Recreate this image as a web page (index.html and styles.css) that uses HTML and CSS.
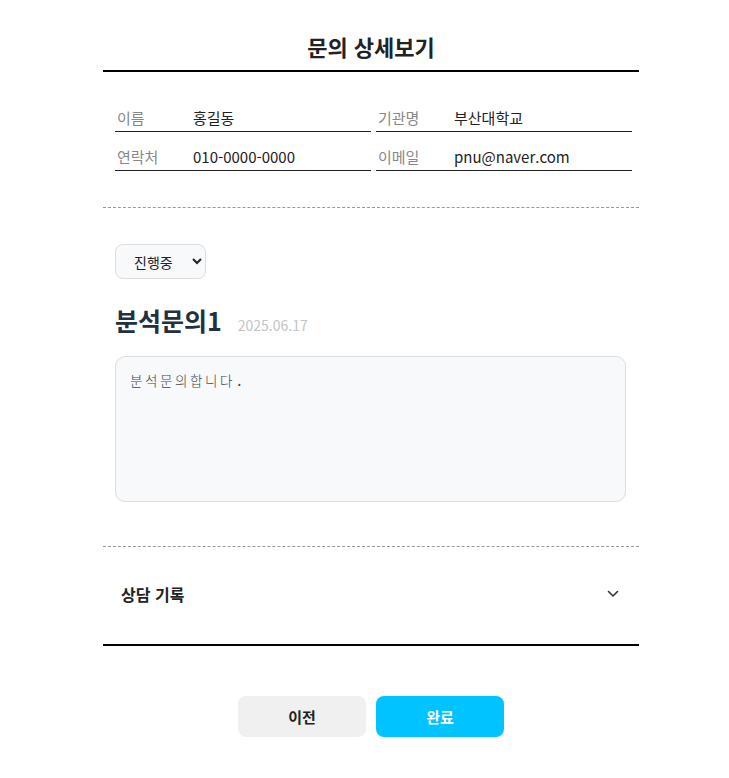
FILE: index.html
```html
<!DOCTYPE html>
<html lang="ko">
<head>
    <meta charset="UTF-8">
    <meta name="viewport" content="width=device-width, initial-scale=1.0">
    <title>문의 상세보기</title>
    <link rel="stylesheet" href="styles.css">
</head>
<body>
    <div class="page">
        <h1 class="page-title">문의 상세보기</h1>

        <div class="info-grid">
            <div class="info-row">
                <span class="info-label">이름</span>
                <span class="info-value">홍길동</span>
            </div>
            <div class="info-row">
                <span class="info-label">기관명</span>
                <span class="info-value">부산대학교</span>
            </div>
            <div class="info-row">
                <span class="info-label">연락처</span>
                <span class="info-value">010-0000-0000</span>
            </div>
            <div class="info-row">
                <span class="info-label">이메일</span>
                <span class="info-value">pnu@naver.com</span>
            </div>
        </div>

        <div class="inquiry">
            <select class="status-select">
                <option>진행중</option>
                <option>완료</option>
            </select>
            <div class="inquiry-head">
                <h2>분석문의1</h2>
                <span class="inquiry-date">2025.06.17</span>
            </div>
            <textarea class="inquiry-body" readonly>분석문의합니다.</textarea>
        </div>

        <div class="history">
            <span class="history-title">상담 기록</span>
            <svg width="12" height="8" viewBox="0 0 12 8" fill="none">
                <path d="M1.5 1.5 L6 6 L10.5 1.5" stroke="#333" stroke-width="1.6" stroke-linecap="round" stroke-linejoin="round"/>
            </svg>
        </div>

        <div class="actions">
            <button class="btn btn-prev">이전</button>
            <button class="btn btn-done">완료</button>
        </div>
    </div>
</body>
</html>
```

FILE: styles.css
```css
* {
    margin: 0;
    padding: 0;
    box-sizing: border-box;
    font-family: "Noto Sans CJK KR", "Noto Sans", sans-serif;
}
body {
    background: #fff;
    color: #222;
    padding-left: 13px;
}
.page {
    width: 536px;
    margin: 0 auto;
}
.page-title {
    text-align: center;
    font-size: 22px;
    font-weight: 700;
    color: #222;
    padding-top: 30px;
    height: 72px;
    border-bottom: 2px solid #000;
}
.info-grid {
    display: grid;
    grid-template-columns: 1fr 1fr;
    column-gap: 5px;
    row-gap: 14px;
    padding: 35px 7px 36px 12px;
    border-bottom: 1px dashed #999;
}
.info-row {
    display: flex;
    align-items: center;
    height: 25px;
    padding-bottom: 3px;
    border-bottom: 1px solid #222;
}
.info-label {
    width: 78px;
    padding-left: 2px;
    font-size: 15px;
    color: #888;
}
.info-value {
    font-size: 15px;
    color: #222;
}
.inquiry {
    padding: 36px 12px 44px;
    border-bottom: 1px dashed #999;
}
.status-select {
    width: 91px;
    height: 35px;
    padding: 0 8px 0 14px;
    font-size: 14px;
    color: #222;
    background: #f8f9fb;
    border: 1px solid #ddd;
    border-radius: 8px;
}
.inquiry-head {
    display: flex;
    align-items: baseline;
    gap: 16px;
    margin: 23px 0 18px;
}
.inquiry-head h2 {
    font-size: 25px;
    font-weight: 700;
    color: #22303f;
}
.inquiry-date {
    font-size: 14px;
    color: #c4c4c4;
}
.inquiry-body {
    display: block;
    width: 511px;
    height: 146px;
    padding: 13px 14px;
    font-family: "DejaVu Sans Mono", "Noto Sans CJK KR", monospace;
    font-size: 13.5px;
    font-weight: 300;
    letter-spacing: 2.6px;
    color: #444;
    background: #f8f9fb;
    border: 1px solid #ddd;
    border-radius: 10px;
    resize: none;
    outline: none;
}
.history {
    display: flex;
    justify-content: space-between;
    align-items: center;
    height: 99px;
    padding: 0 20px 4px 18px;
    border-bottom: 2px solid #000;
}
.history-title {
    font-size: 16px;
    font-weight: 700;
    color: #222;
}
.actions {
    display: flex;
    justify-content: center;
    gap: 10px;
    margin-top: 50px;
}
.btn {
    width: 128px;
    height: 41px;
    border: none;
    border-radius: 8px;
    font-size: 15px;
    font-weight: 700;
    cursor: pointer;
}
.btn-prev {
    background: #f0f0f0;
    color: #222;
}
.btn-done {
    background: #00c3ff;
    color: #fff;
}
```
